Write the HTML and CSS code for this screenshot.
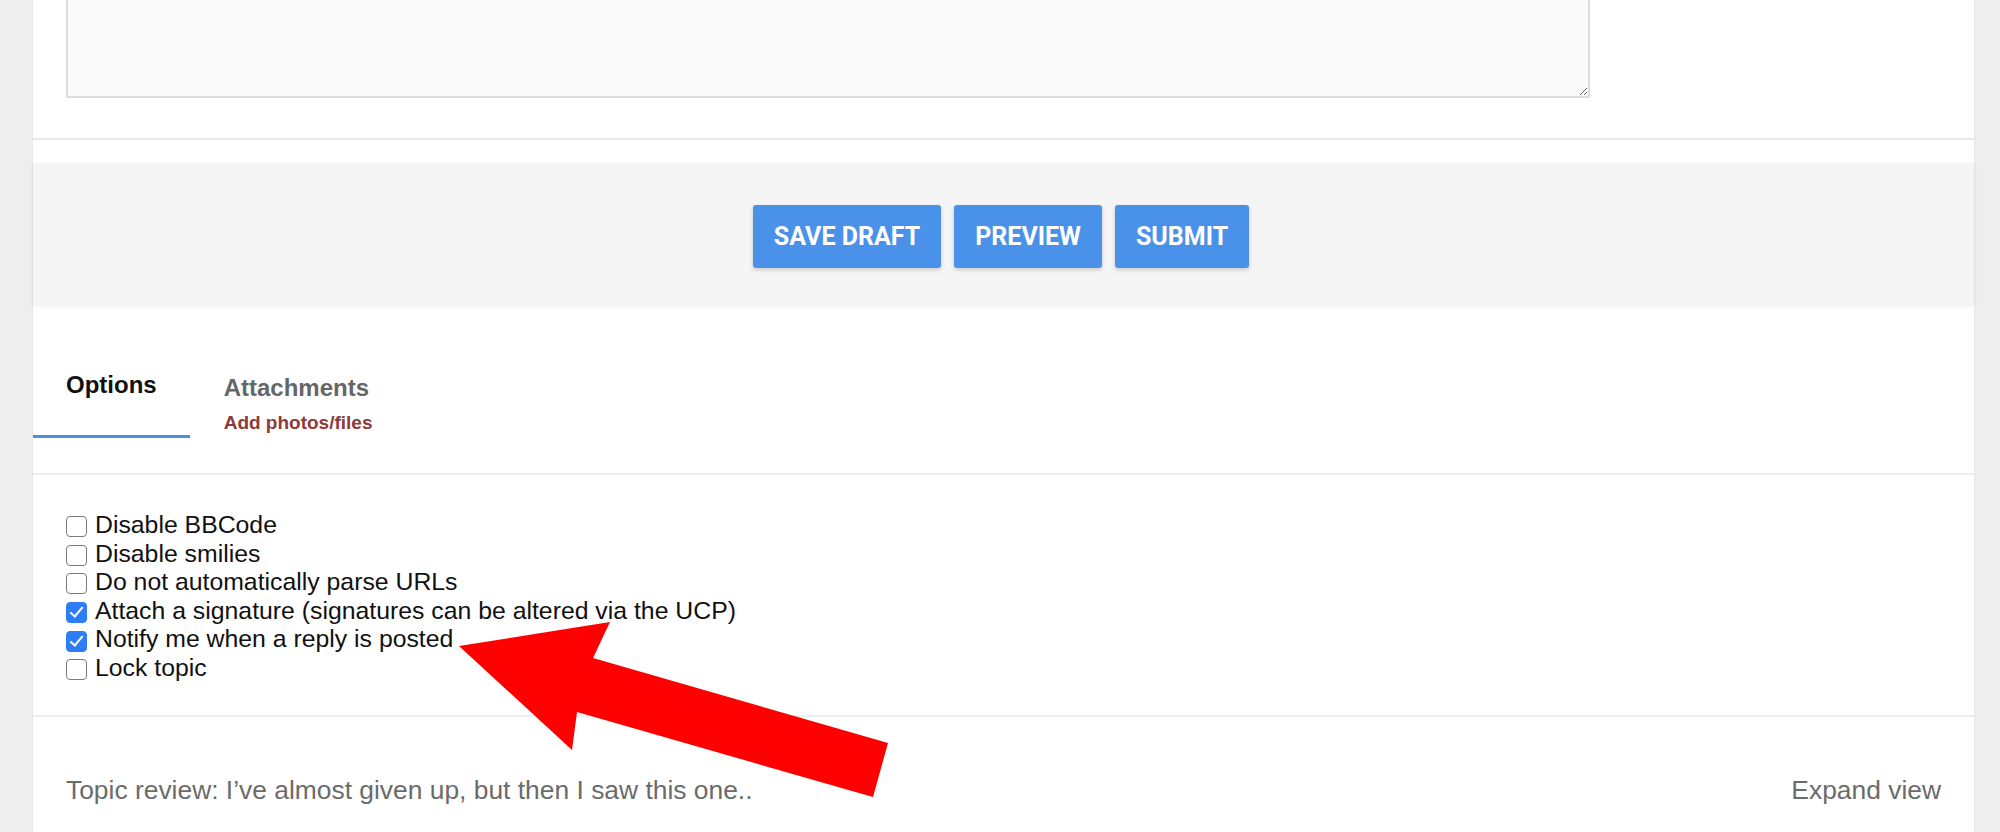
FILE: index.html
```html
<!DOCTYPE html>
<html lang="en">
<head>
  <meta charset="UTF-8" />
  <title>Post a reply</title>
  <link rel="stylesheet" href="styles.css">
</head>
<body>

  <div class="page">
    <!-- editor -->
    <section class="editor">
      <textarea class="message"></textarea>
    </section>

    <!-- submit buttons -->
    <div class="actions">
      <button class="btn">Save draft</button>
      <button class="btn">Preview</button>
      <button class="btn">Submit</button>
    </div>

    <!-- tabs -->
    <nav class="tabs">
      <div class="tab active">
        <span class="tab-title">Options</span>
      </div>
      <div class="tab">
        <span class="tab-title">Attachments</span>
        <span class="tab-sub">Add photos/files</span>
      </div>
    </nav>

    <!-- posting options -->
    <section class="options">
      <label class="option"><input type="checkbox" />Disable BBCode</label>
      <label class="option"><input type="checkbox" />Disable smilies</label>
      <label class="option"><input type="checkbox" />Do not automatically parse URLs</label>
      <label class="option"><input type="checkbox" checked />Attach a signature (signatures can be altered via the UCP)</label>
      <label class="option"><input type="checkbox" checked />Notify me when a reply is posted</label>
      <label class="option"><input type="checkbox" />Lock topic</label>
    </section>

    <!-- topic review -->
    <section class="review">
      <span>Topic review: I’ve almost given up, but then I saw this one..</span>
      <a class="expand">Expand view</a>
    </section>
  </div>

  <!-- annotation arrow -->
  <svg class="arrow" width="2000" height="832" viewBox="0 0 2000 832">
    <polygon points="459,646 610,622 593,658 888,743 873,797 577,712 572,750" fill="#fe0000" />
  </svg>

</body>
</html>
```

FILE: styles.css
```css
body {
  font-family: 'Liberation Sans', Arial, sans-serif;
  margin: 0;
  padding: 0;
  background-color: #eeeeee;
  overflow: hidden;
  position: relative;
}

.page {
  margin-top: -120px;
  margin-left: 33px;
  width: 1941px;
  background-color: #fff;
  box-shadow: 0 0 2px rgba(0, 0, 0, 0.08);
}

.editor {
  padding: 20px 33px 40px;
  border-bottom: 2px solid #e9e9e9;
}

.message {
  display: block;
  width: 1524px;
  height: 198px;
  box-sizing: border-box;
  background-color: #fafafa;
  border: 2px solid #dcdcdc;
  margin: 0;
}

.actions {
  margin-top: 23px;
  margin-bottom: 5px;
  padding: 42px 5px 37px 0;
  background-color: #f5f5f5;
  display: flex;
  justify-content: center;
  gap: 13px;
  box-shadow: 0 1px 4px rgba(0, 0, 0, 0.08);
}

.btn {
  height: 63px;
  padding: 0 21px;
  background-color: #4a91e9;
  color: #fff;
  border: none;
  border-radius: 3px;
  font-family: Roboto, 'Liberation Sans', sans-serif;
  font-weight: 700;
  font-size: 25px;
  text-transform: uppercase;
  box-shadow: 0 2px 4px rgba(0, 0, 0, 0.18);
  cursor: pointer;
}

.tabs {
  display: flex;
  align-items: flex-start;
  padding-bottom: 35px;
  border-bottom: 2px solid #eeeeee;
}

.tab {
  display: flex;
  flex-direction: column;
  padding: 64px 34px 0;
  color: #666;
}

.tab.active {
  padding: 61px 33px 36px;
  color: #111;
  border-bottom: 3px solid #4a90e2;
}

.tab-title {
  font-size: 24px;
  font-weight: 700;
  line-height: 28px;
}

.tab-sub {
  margin-top: 10px;
  font-size: 19px;
  font-weight: 700;
  line-height: 22px;
  color: #8e3a3a;
}

.options {
  padding: 36px 33px 32px;
  border-bottom: 2px solid #eeeeee;
}

.option {
  display: flex;
  align-items: center;
  font-size: 24.8px;
  line-height: 28.6px;
  color: #111;
}

.option input {
  appearance: none;
  position: relative;
  width: 21px;
  height: 21px;
  margin: 3px 8px 0 0;
  border: 1.5px solid #7a7a7a;
  border-radius: 4px;
  background-color: #fff;
  box-sizing: border-box;
}

.option input:checked {
  background-color: #2f7df6;
  border-color: #2f7df6;
}

.option input:checked::after {
  content: "";
  position: absolute;
  left: 6px;
  top: 1px;
  width: 5px;
  height: 11px;
  border: solid #fff;
  border-width: 0 2.5px 2.5px 0;
  transform: rotate(40deg);
}

.review {
  display: flex;
  justify-content: space-between;
  padding: 58px 33px;
  font-size: 26.4px;
  line-height: 30px;
  color: #6b6b6b;
}

.expand {
  color: #6b6b6b;
  cursor: pointer;
}

.arrow {
  position: absolute;
  top: 0;
  left: 0;
  pointer-events: none;
}
```
